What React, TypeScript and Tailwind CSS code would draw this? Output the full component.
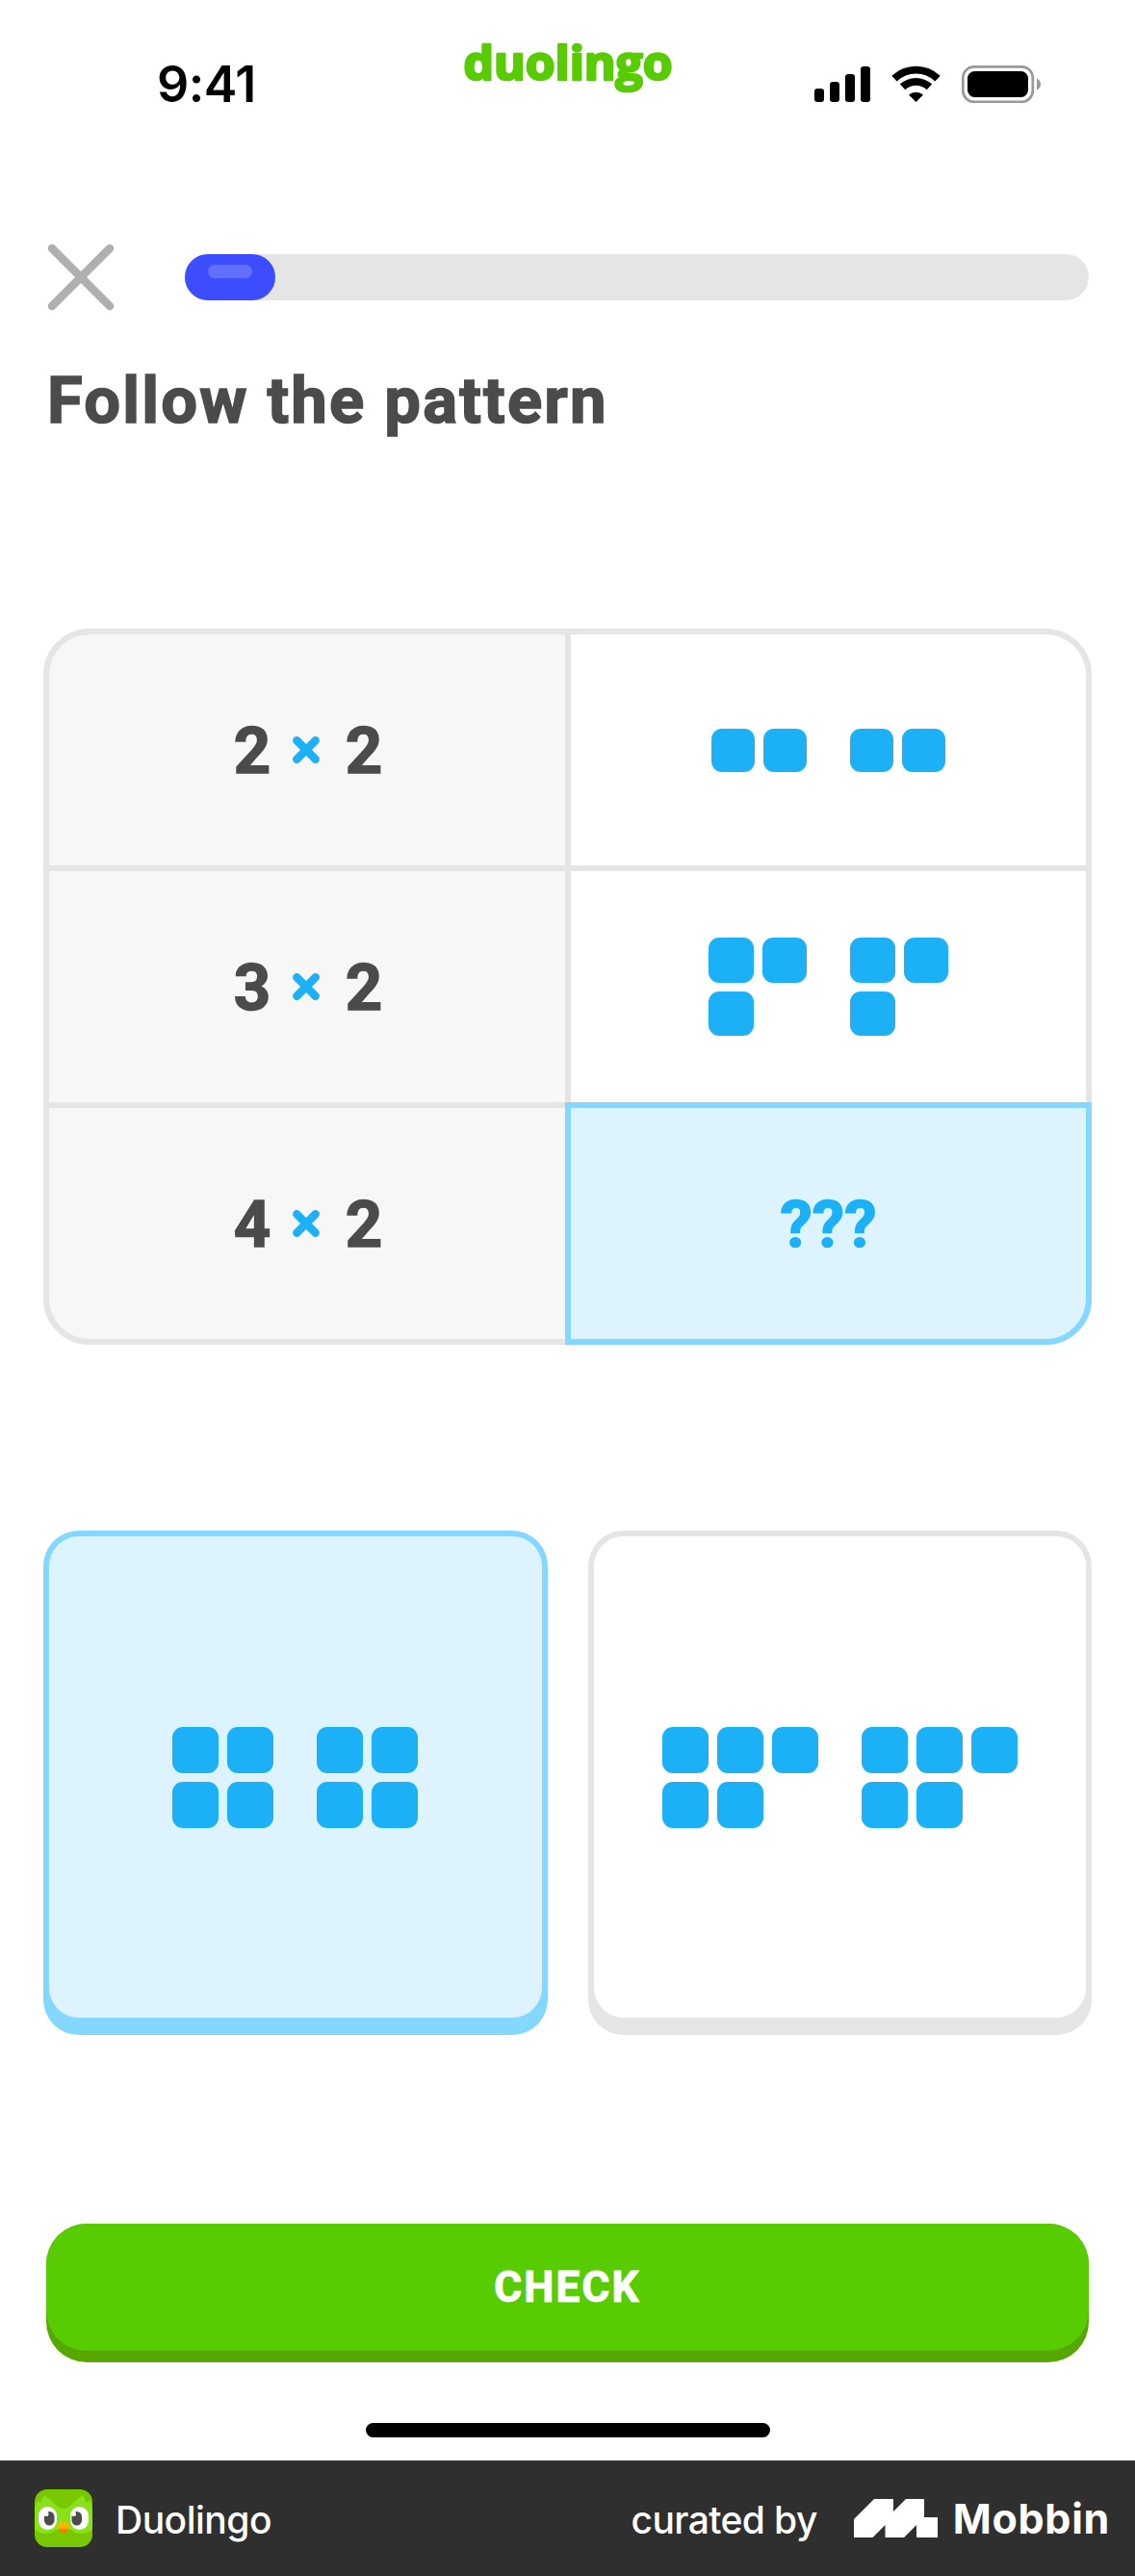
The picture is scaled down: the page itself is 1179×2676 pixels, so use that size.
import type { ReactNode } from "react";

type Shape = { rows: number[]; size: string; gap: string };

function Squares({ rows, size, gap }: Shape) {
  return (
    <div className={`flex flex-col ${gap}`}>
      {rows.map((n, r) => (
        <div key={r} className={`flex ${gap}`}>
          {Array.from({ length: n }, (_, i) => (
            <div key={i} className={`rounded-[11px] bg-[#1cb0f6] ${size}`} />
          ))}
        </div>
      ))}
    </div>
  );
}

function Pair(props: Shape) {
  return (
    <div className="flex gap-[45px]">
      <Squares {...props} />
      <Squares {...props} />
    </div>
  );
}

function Times() {
  return (
    <svg className="h-[28px] w-[28px]" viewBox="0 0 28 28">
      <path d="M4.300 4.300 23.700 23.700M23.700 4.300 4.300 23.700" stroke="#1cb0f6" strokeWidth="8.400" strokeLinecap="round" />
    </svg>
  );
}

function Expression({ a, b }: { a: number; b: number }) {
  return (
    <div className="flex items-center justify-center bg-[#f7f7f7] pl-0.5 font-['Roboto',sans-serif] text-[67px] leading-[80px] font-bold text-[#4b4b4b] [-webkit-text-stroke:1.5px_#4b4b4b]">
      <span className="mt-[2px] w-[40px] text-center">{a}</span>
      <span className="mr-[26px] ml-[22px]">
        <Times />
      </span>
      <span className="mt-[2px] w-[40px] text-center">{b}</span>
    </div>
  );
}

function Card({ selected, children }: { selected?: boolean; children: ReactNode }) {
  return (
    <button
      className={`flex h-[524px] flex-1 rounded-[37px] px-1.5 pt-1.5 pb-[18px] ${selected ? "bg-[#84d8ff]" : "bg-[#e5e5e5]"}`}
    >
      <span
        className={`flex h-full w-full items-center justify-center rounded-[31px] ${selected ? "bg-[#ddf4ff]" : "bg-white"}`}
      >
        {children}
      </span>
    </button>
  );
}

function StatusBar() {
  return (
    <header className="flex h-[254px] items-start pl-[163px]">
      <div className="mt-[58px] w-[301px] font-['Inter',sans-serif] text-[52px] leading-[60px] font-semibold tracking-[-0.5px] text-black">
        9:41
      </div>
      <svg className="mt-[32px] h-[80px] w-[250px]" viewBox="0 0 250 80">
        <text
          x="17.500"
          y="50.500"
          textLength="217"
          lengthAdjust="spacingAndGlyphs"
          fontFamily="Open Sans, sans-serif"
          fontWeight="700"
          fontSize="48"
          fill="#58cc02"
          stroke="#58cc02"
          strokeWidth="2.600"
          strokeLinejoin="round"
        >
          duolingo
        </text>
      </svg>
      <svg className="mt-[68px] ml-[132px] h-[39px] w-[236px]" viewBox="0 0 236 39">
        <rect x="0" y="24" width="10" height="14" rx="3.2" />
        <rect x="16" y="17" width="10" height="21" rx="3.2" />
        <rect x="32" y="9" width="10" height="29" rx="3.2" />
        <rect x="48" y="1" width="10" height="37" rx="3.2" />
        <g fill="none" stroke="#000" strokeWidth="7.8">
          <path d="M83 13.6A32.5 32.5 0 0 1 128 13.6" />
          <path d="M91.6 22.4A20 20 0 0 1 119.4 22.4" />
        </g>
        <path d="M98 30.5a11.3 11.3 0 0 1 15 0L105.500 38z" />
        <rect x="154.300" y="1.300" width="72.500" height="36.500" rx="11.500" fill="none" stroke="#999" strokeWidth="2.700" />
        <rect x="159" y="6" width="63" height="27" rx="7.500" />
        <path d="M231 13.500q4 2 4 6t-4 6z" fill="#999" />
      </svg>
    </header>
  );
}

function OwlIcon() {
  return (
    <svg className="h-[60px] w-[60px]" viewBox="0 0 60 60">
      <defs>
        <clipPath id="owl-tile">
          <rect width="60" height="60" rx="13" />
        </clipPath>
      </defs>
      <g clipPath="url(#owl-tile)">
        <rect width="60" height="60" fill="#78c800" />
        <path d="M0 20 3 11l3 3 4-8 9 7c4 4 7 7 11 7s7-3 11-7l9-7 4 8 3-3 3 9v22q-12 8-22 0H22Q12 50 0 42z" fill="#89e219" />
        <path d="M11 0c6 11 13 20 19 20S43 11 49 0z" fill="#78c800" />
        <rect x="4" y="18" width="19" height="24" rx="9.500" fill="#fff" />
        <rect x="37" y="18" width="19" height="24" rx="9.500" fill="#fff" />
        <rect x="10" y="23" width="10.500" height="14.500" rx="5.250" fill="#4b4b4b" />
        <rect x="38.500" y="23" width="10.500" height="14.500" rx="5.250" fill="#4b4b4b" />
        <circle cx="12" cy="25.500" r="2.500" fill="#fff" />
        <circle cx="40.500" cy="25.500" r="2.500" fill="#fff" />
        <path d="M25 40q5-3 10 0-1 6-5 6t-5-6" fill="#f47d02" />
        <path d="M23.500 38.500Q25 34 30 34t6.500 4.500Q36 41 30 41t-6.500-2.500" fill="#ffb400" />
      </g>
    </svg>
  );
}

export default function App() {
  return (
    <div className="flex h-[2676px] w-[1179px] flex-col overflow-hidden bg-white">
      <StatusBar />

      <div className="flex h-[68px] items-center pr-12 pl-[49px]">
        <svg className="h-[70px] w-[70px]" viewBox="0 0 70 70">
          <path d="M5 5 65 65M65 5 5 65" stroke="#afafaf" strokeWidth="8.500" strokeLinecap="round" />
        </svg>
        <div className="ml-[73px] h-12 flex-1 rounded-full bg-[#e5e5e5]">
          <div className="h-12 w-[94px] rounded-full bg-[#3c4dff] px-6 pt-[11px]">
            <div className="h-[14px] rounded-full bg-[#636fff]" />
          </div>
        </div>
      </div>

      <h1 className="mt-[49px] ml-[49px] h-[89px] font-['Roboto',sans-serif] text-[67px] leading-[90px] font-bold tracking-[2.2px] whitespace-nowrap text-[#4b4b4b] [-webkit-text-stroke:1.5px_#4b4b4b]">
        Follow the pattern
      </h1>

      <div className="relative mt-[193px] ml-[45px] h-[744px] w-[1089px]">
        <div className="grid h-full grid-cols-[536px_535px] grid-rows-3 gap-1.5 overflow-hidden rounded-[48px] border-6 border-[#e5e5e5] bg-[#e5e5e5]">
          <Expression a={2} b={2} />
          <div className="flex items-center justify-center bg-white">
            <Pair rows={[2]} size="size-[45px]" gap="gap-[9px]" />
          </div>
          <Expression a={3} b={2} />
          <div className="flex items-center justify-center bg-white">
            <Pair rows={[2, 1]} size="size-[46.5px]" gap="gap-[9px]" />
          </div>
          <Expression a={4} b={2} />
        </div>
        <div className="absolute right-0 bottom-0 flex h-[252px] w-[547px] items-center justify-center rounded-br-[48px] border-6 border-[#84d8ff] bg-[#ddf4ff] pt-[3px] font-['Roboto',sans-serif] text-[67px] font-bold text-[#1cb0f6] [-webkit-text-stroke:1.5px_#1cb0f6]">
          ???
        </div>
      </div>

      <div className="mt-[193px] flex gap-[42px] px-[45px]">
        <Card selected>
          <Pair rows={[2, 2]} size="size-12" gap="gap-[9px]" />
        </Card>
        <Card>
          <Pair rows={[3, 2]} size="size-12" gap="gap-[9px]" />
        </Card>
      </div>

      <button className="mx-12 mt-[196px] h-[144px] rounded-[42px] bg-[#58a700] pb-3">
        <span className="flex h-full items-center justify-center rounded-[42px] bg-[#58cc02] font-['Roboto',sans-serif] text-[44px] font-bold tracking-[2.2px] text-white [-webkit-text-stroke:1px_white]">
          CHECK
        </span>
      </button>

      <div className="mx-auto mt-[63px] h-[15px] w-[420px] rounded-full bg-black" />

      <footer className="mt-auto flex h-[120px] items-center bg-[#2f2f2f] pr-[26px] pl-9 font-['Inter',sans-serif] text-white">
        <OwlIcon />
        <span className="mt-[4px] ml-6 text-[39px] font-medium tracking-[-0.5px]">Duolingo</span>
        <span className="mt-[4px] ml-auto text-[39px] font-medium tracking-[-0.6px]">curated by</span>
        <svg className="mr-4 ml-[38px] h-[40px] w-[87px]" viewBox="0 0 87 40" fill="#fff">
          <path d="M0 21 21 0h20v13L54 0h19v19h14v21H65V27L52 40H32.500V27L19.500 40H0z" />
        </svg>
        <span className="mt-px text-[43px] font-bold tracking-[0.7px]">Mobbin</span>
      </footer>
    </div>
  );
}
